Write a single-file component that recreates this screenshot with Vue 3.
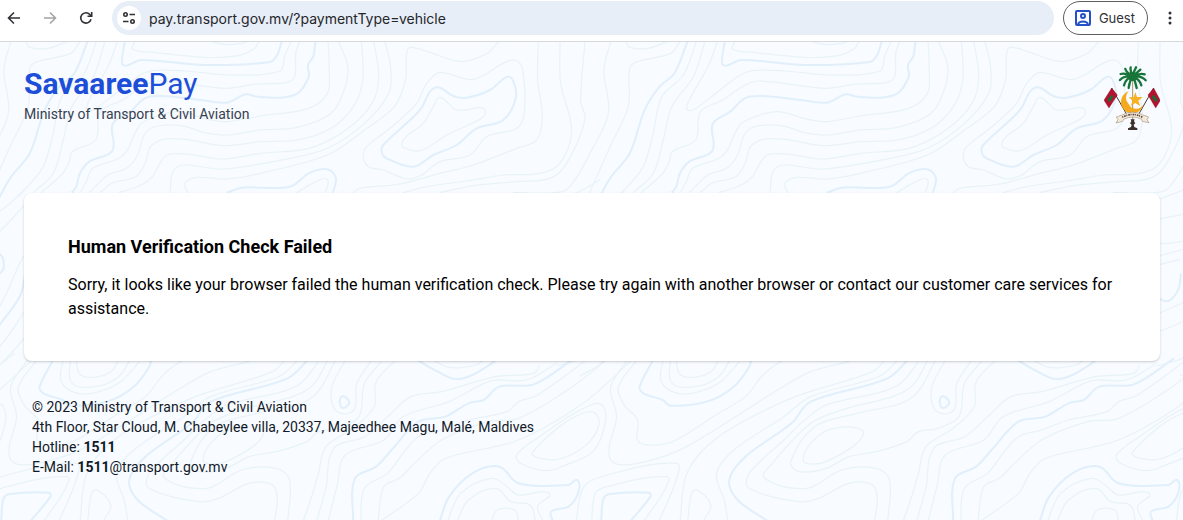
<script setup>
import { ref } from 'vue'

const url = ref('pay.transport.gov.mv/?paymentType=vehicle')

// Contour lines of the background, repeated every 600px
const TILE = 600
const tiles = [-1, 0, 1, 2, 3, 4]

const regions = [
  {
    transform: 'translate(0 -2) scale(.372 .3333)',
    thin: [
      [362, 5, 357, 28, 420, 38, 550, 52, 640, 47, 685, 25, 695, 5],
      [570, 5, 610, 14, 650, 10, 665, 5],
      [782, 5, 765, 50, 752, 93, 620, 105, 500, 93, 410, 92, 370, 110, 300, 170, 250, 210, 233, 208, 240, 180, 290, 80, 308, 30, 315, 5],
      [805, 5, 795, 40, 792, 110, 770, 128, 690, 132, 610, 145, 560, 140, 430, 123, 390, 135, 330, 180, 270, 215, 257, 300, 195, 335, 185, 370, 165, 405, 110, 458],
      [882, 5, 885, 100, 880, 160, 830, 205, 700, 228, 610, 245, 560, 238, 480, 215, 430, 225, 380, 250, 365, 275, 345, 325, 320, 355, 250, 385, 230, 430, 215, 458],
      [910, 5, 935, 80, 925, 150, 890, 220, 800, 262, 700, 270, 610, 285, 550, 278, 500, 260, 450, 255, 405, 265, 385, 290, 370, 345, 340, 385, 290, 405, 240, 458],
      [972, 5, 975, 120, 950, 200, 890, 265, 800, 300, 700, 305, 600, 317, 500, 298, 440, 298, 405, 320, 390, 370, 365, 410, 300, 430, 270, 458],
      [1005, 5, 1018, 110, 1000, 190, 930, 270, 830, 325, 700, 340, 600, 357, 500, 342, 450, 345, 430, 370, 410, 410, 380, 435, 320, 458],
      [1035, 5, 1050, 80, 1045, 160, 980, 250, 880, 325, 780, 355, 600, 387, 490, 375, 465, 395, 457, 458],
      [1340, 5, 1310, 40, 1240, 65, 1150, 35, 1103, 22, 1093, 40, 1090, 120, 1060, 200, 980, 270, 880, 345, 700, 400, 610, 417, 530, 412, 500, 425, 497, 440, 505, 458],
      [797, 458, 850, 425, 880, 418, 875, 458],
      [70, 5, 80, 22, 130, 25, 180, 5],
      [215, 5, 190, 40, 100, 65, 80, 85, 76, 200, 27, 320, -27, 455, -35, 475],
      [259, 5, 224, 105, 166, 170, 143, 280, 116, 380, 62, 455, 50, 470],
      [282, 5, 251, 110, 193, 200, 170, 300, 143, 400, 90, 458]
    ],
    bold: [
      [335, 5, 328, 70, 340, 77, 380, 60, 550, 75, 725, 66, 745, 45, 757, 5],
      [848, 5, 842, 50, 828, 75, 830, 110, 800, 160, 755, 173, 690, 170, 660, 163, 610, 188, 540, 180, 400, 170, 350, 215, 303, 252, 302, 332, 240, 365, 215, 400, 205, 440, 193, 458],
      [610, 458, 650, 443, 780, 440, 830, 400, 880, 388, 903, 415, 895, 458],
      [235, 5, 200, 100, 160, 140, 120, 210, 80, 340, 30, 410, 5, 458, -10, 490]
    ],
    rings: [],
    boldRings: []
  },
  {
    transform: 'translate(240 -2) scale(.3333)',
    thin: [
      [895, 5, 893, 120, 907, 230, 890, 300, 830, 325, 700, 375, 600, 400, 480, 432, 360, 445, 340, 458],
      [960, 5, 962, 130, 995, 270, 960, 370, 900, 400, 790, 405, 700, 420, 560, 440, 490, 458],
      [1035, 5, 1022, 180, 1035, 240, 980, 370, 930, 415, 830, 425, 700, 437, 600, 458],
      [1112, 5, 1092, 90, 1105, 220, 1050, 340, 990, 440, 950, 458, 820, 458]
    ],
    bold: [],
    rings: [
      [370, 350, 385, 380, 430, 390, 500, 417, 545, 405, 600, 365, 690, 345, 740, 290, 830, 265, 853, 220, 850, 100, 835, 65, 800, 65, 700, 118, 600, 98, 560, 130, 530, 190, 450, 265, 380, 320],
      [485, 310, 525, 333, 560, 325, 620, 285, 720, 238, 737, 215, 725, 203, 650, 210, 600, 172, 580, 200, 550, 250]
    ],
    boldRings: [
      [425, 335, 440, 355, 520, 380, 580, 345, 650, 315, 710, 265, 790, 240, 828, 170, 815, 115, 797, 112, 750, 150, 680, 173, 640, 168, 595, 142, 570, 155, 540, 210, 430, 315]
    ]
  },
  {
    transform: 'translate(0 144) scale(.3333)',
    thin: [
      [-130, 42, -52, 12, 0, -20],
      [-130, 100, -50, 85, 0, 75, 75, 10],
      [-130, 174, -50, 165, 0, 135, 75, 55],
      [-130, 212, -50, 190],
      [-130, 238, -60, 220],
      [-130, 440, -40, 400, 0, 360, 60, 230, 75, 205],
      [-130, 540, -60, 520, 0, 480, 75, 375],
      [-60, 570, 0, 535, 80, 450],
      [-130, 385, -50, 350]
    ],
    bold: [
      [-130, 335, -95, 345, -65, 310, -57, 262],
      [-30, 450, 0, 415, 60, 330, 76, 260],
      [-5, 200, 8, 215, 10, 250, -5, 265]
    ],
    rings: [],
    boldRings: []
  },
  {
    transform: 'translate(-20 308) scale(.3846 .3333)',
    thin: [
      [218, 20, 210, 90, 240, 125, 290, 130, 360, 100, 415, 35],
      [235, 20, 240, 100, 300, 110, 360, 80, 395, 20],
      [250, 20, 258, 70, 290, 82, 340, 65, 365, 20],
      [130, 20, 80, 110, 95, 200, 75, 300, 90, 340, 150, 340, 250, 305, 350, 240, 500, 130, 600, 65, 700, 35],
      [155, 20, 100, 110, 115, 165, 150, 210, 152, 275, 200, 285, 250, 270, 360, 190, 430, 140, 480, 70, 540, 20],
      [260, 515, 275, 380, 320, 300, 400, 230, 560, 140, 760, 65, 800, 20],
      [385, 515, 375, 450, 355, 370, 400, 300, 530, 200, 600, 140, 780, 78, 830, 25],
      [890, 20, 820, 110, 640, 165, 580, 215, 530, 270, 440, 370, 440, 415, 570, 455, 620, 445, 700, 400, 760, 405, 773, 450, 765, 515],
      [910, 20, 850, 120, 680, 180, 600, 220, 500, 340, 480, 385, 590, 415, 680, 360, 770, 355, 805, 390, 800, 515],
      [930, 20, 860, 145, 720, 190, 610, 230, 548, 335, 570, 365, 640, 355, 700, 320, 770, 305, 850, 275, 880, 245, 930, 235, 985, 200, 1000, 100, 1055, 20],
      [955, 20, 915, 110, 920, 175, 950, 192, 975, 175, 980, 100, 1025, 20],
      [1090, 20, 1030, 95, 1025, 170, 970, 235, 900, 290, 880, 370, 865, 430, 840, 515],
      [1455, 45, 1440, 70, 1340, 80, 1200, 125, 1120, 140, 1060, 200, 1000, 260, 920, 295, 900, 410, 875, 515],
      [1500, 40, 1420, 90, 1330, 92, 1220, 155, 1100, 200, 1050, 270, 950, 315, 930, 400, 905, 515],
      [1170, 25, 1220, 52, 1290, 45, 1315, 25],
      [1600, 10, 1450, 135, 1400, 155, 1370, 185, 1270, 210, 1200, 240, 1140, 260, 1100, 310, 1060, 370, 1000, 415, 990, 515],
      [1650, 10, 1540, 110, 1400, 205, 1320, 215, 1200, 270, 1130, 340, 1090, 385, 1050, 410, 1035, 515],
      [1700, 25, 1568, 160, 1400, 270, 1210, 325, 1170, 370, 1140, 430, 1040, 515],
      [30, 515, 40, 430, 70, 410, 225, 380, 220, 420, 165, 515],
      [-10, 515, 10, 410, 70, 375, 250, 340, 250, 390, 205, 515],
      [280, 515, 290, 430, 305, 420, 340, 465, 320, 515],
      [1215, 515, 1250, 430, 1330, 385, 1370, 410, 1400, 435, 1480, 430, 1450, 470, 1465, 515],
      [1240, 515, 1270, 450, 1340, 415, 1380, 455, 1430, 465, 1445, 515],
      [1330, 515, 1345, 480, 1390, 480, 1400, 515]
    ],
    bold: [
      [195, 20, 155, 110, 165, 130, 215, 150, 235, 167, 330, 155, 400, 110, 440, 50, 447, 20],
      [860, 20, 800, 85, 600, 155, 550, 220, 430, 320, 388, 390, 410, 450, 490, 515],
      [1130, 25, 1190, 65, 1235, 87, 1280, 75, 1350, 25],
      [1545, 25, 1440, 103, 1350, 110, 1310, 150, 1270, 160, 1210, 200, 1140, 215, 1070, 300, 1030, 350, 975, 385, 970, 515],
      [55, 515, 60, 450, 75, 433, 180, 428, 183, 440, 130, 515],
      [1195, 515, 1220, 440, 1280, 370, 1350, 350, 1400, 400, 1530, 405, 1553, 390, 1555, 430, 1530, 470, 1485, 485, 1490, 515]
    ],
    rings: [
      [580, 330, 600, 342, 640, 335, 720, 280, 733, 240, 650, 238, 600, 280]
    ],
    boldRings: [
      [940, 140, 938, 170, 948, 173, 960, 155]
    ]
  },
  {
    transform: 'translate(500 316) scale(.3333)',
    thin: [],
    bold: [],
    rings: [
      [50, 290, 60, 315, 140, 338, 200, 320, 280, 280, 315, 200, 310, 145, 280, 138, 200, 180, 120, 235],
      [97, 285, 115, 300, 180, 303, 260, 260, 297, 200, 285, 165, 250, 165, 180, 205]
    ],
    boldRings: []
  }
]

// Catmull-Rom through the points, written as cubic beziers
function smooth(flat, closed = false) {
  const pts = []
  for (let i = 0; i < flat.length; i += 2) pts.push([flat[i], flat[i + 1]])
  const n = pts.length
  const at = i => (closed ? pts[(i + n) % n] : pts[Math.max(0, Math.min(n - 1, i))])
  let d = `M${pts[0].join(' ')}`
  const last = closed ? n : n - 1
  for (let i = 0; i < last; i++) {
    const [a, b, c, e] = [at(i - 1), at(i), at(i + 1), at(i + 2)]
    // handles shortened so uneven spacing does not overshoot
    const len = Math.hypot(c[0] - b[0], c[1] - b[1])
    const handle = (p, q) => {
      const l = Math.hypot(q[0] - p[0], q[1] - p[1]) || 1
      return [((q[0] - p[0]) / l) * len * 0.33, ((q[1] - p[1]) / l) * len * 0.33]
    }
    const h1 = handle(a, c)
    const h2 = handle(b, e)
    d += `C${[b[0] + h1[0], b[1] + h1[1], c[0] - h2[0], c[1] - h2[1], c[0], c[1]].map(v => v.toFixed(1)).join(' ')}`
  }
  return closed ? d + 'Z' : d
}

const contours = regions.map(r => ({
  transform: r.transform,
  thin: r.thin.map(l => smooth(l)).concat(r.rings.map(l => smooth(l, true))).join(''),
  bold: r.bold.map(l => smooth(l)).concat(r.boldRings.map(l => smooth(l, true))).join('')
}))

const fronds = [
  'M98 50Q90 34 92 22', 'M98 50Q102 32 108 22', 'M98 50Q78 36 76 27', 'M98 50Q116 34 121 29',
  'M98 50Q76 38 62 42', 'M98 50Q120 38 134 43', 'M98 50Q72 46 60 60', 'M98 50Q124 46 137 61',
  'M98 50Q78 54 72 76', 'M98 50Q118 56 124 76', 'M98 50Q88 64 86 84', 'M98 50Q107 64 110 84'
]
</script>

<template>
  <div class="browser">
    <nav class="toolbar" aria-label="Browser">
      <button class="tool" type="button" aria-label="Back">
        <svg viewBox="0 0 16 16"><path d="M14 8H3M8 2.5L2.5 8L8 13.5" /></svg>
      </button>
      <button class="tool muted" type="button" aria-label="Forward">
        <svg viewBox="0 0 16 16"><path d="M2 8H13M8 2.5L13.5 8L8 13.5" /></svg>
      </button>
      <button class="tool" type="button" aria-label="Reload">
        <svg viewBox="0 0 16 16"><path d="M13 9.2A5.2 5.2 0 1 1 11.9 4.5L13.5 6.2M13.7 2V6.3H9.5" /></svg>
      </button>
      <div class="address">
        <button class="site-info" type="button" aria-label="Site information">
          <svg viewBox="0 0 16 16">
            <circle cx="4.5" cy="4.5" r="1.7" /><path d="M8.5 4.5H14M2 11.5H7.5" /><circle cx="11.5" cy="11.5" r="1.7" />
          </svg>
        </button>
        <input v-model="url" type="text" aria-label="Address" spellcheck="false">
      </div>
      <button class="guest" type="button">
        <svg viewBox="0 0 16 16">
          <rect x="1" y="1" width="14" height="14" rx="1" />
          <circle cx="8" cy="6" r="2" />
          <path d="M3 14.5C4 10.5 12 10.5 13 14.5" />
        </svg>
        Guest
      </button>
      <button class="more" type="button" aria-label="Menu">
        <svg viewBox="0 0 4 16"><circle cx="2" cy="3" r="1.5" /><circle cx="2" cy="8" r="1.5" /><circle cx="2" cy="13" r="1.5" /></svg>
      </button>
    </nav>

    <div class="page">
      <svg class="topo" aria-hidden="true">
        <g v-for="t in tiles" :key="t" :transform="`translate(${t * TILE} 0)`">
          <g v-for="(c, i) in contours" :key="i" :transform="c.transform">
            <path class="thin" :d="c.thin" />
            <path class="bold" :d="c.bold" />
          </g>
        </g>
      </svg>

      <header class="header">
        <div>
          <h1><strong>Savaaree</strong>Pay</h1>
          <p>Ministry of Transport &amp; Civil Aviation</p>
        </div>
        <svg class="emblem" viewBox="12 18 168 192" role="img" aria-label="Emblem of the Maldives">
          <path class="trunk" d="M98 52V196" />
          <path class="pole" d="M35 84L84 170M161 84L112 170" />
          <path class="flag" d="M35 84L52 105L27 144L12 121Z" />
          <path class="flag" d="M161 84L144 105L167 144L181 121Z" />
          <path class="panel" d="M34 104L40 111L28 127L22 119Z" />
          <path class="panel" d="M161 104L155 111L167 127L173 119Z" />
          <path class="fronds" :d="fronds.join('')" />
          <circle class="crown" cx="98" cy="49" r="14" />
          <path class="gold" d="M86 94A34 34 0 1 0 130 134A25 25 0 0 1 86 132A26 26 0 0 1 86 94Z" />
          <path class="star" d="M106 96L111 111L128 111L115 122L121 139L106 129L92 138L98 122L86 112L101 111Z" />
          <path class="ribbon" d="M49 171L66 165Q98 148 129 165L146 171L141 179L147 188L127 184L125 178Q98 164 71 178L68 184L48 189L54 179Z" />
          <path class="script" d="M67 172Q98 155 128 172" />
          <path class="foot" d="M92 178H104L102 184L106 190L101 194L103 201L112 205V210H84V205L93 201L95 194L90 190L94 184Z" />
        </svg>
      </header>

      <main class="card">
        <h2>Human Verification Check Failed</h2>
        <p>Sorry, it looks like your browser failed the human verification check. Please try again with another browser or contact our customer care services for assistance.</p>
      </main>

      <footer class="footer">
        <p>© 2023 Ministry of Transport &amp; Civil Aviation</p>
        <p>4th Floor, Star Cloud, M. Chabeylee villa, 20337, Majeedhee Magu, Malé, Maldives</p>
        <p>Hotline: <a href="tel:1511"><strong>1511</strong></a></p>
        <p>E-Mail: <a href="mailto:1511@transport.gov.mv"><strong>1511</strong>@transport.gov.mv</a></p>
      </footer>
    </div>
  </div>
</template>

<style>
body { margin: 0; background: #f8fbff; }
</style>

<style scoped>
.browser {
  display: flex;
  flex-direction: column;
  min-height: 100vh;
  font-family: Roboto, sans-serif;
  color: #000;
}

h1, h2, p { margin: 0; }
button, input { font: inherit; border: 0; padding: 0; background: none; }
a { color: inherit; text-decoration: none; }

.toolbar {
  display: flex;
  align-items: center;
  box-sizing: border-box;
  height: 42px;
  padding: 0 11px 5px 4px;
  background: #fff;
  border-bottom: 1px solid #d5d9dc;
}
.toolbar svg { display: block; fill: none; stroke: currentColor; }
.tool { flex: none; width: 36px; color: #303236; }
.tool svg { width: 16px; height: 16px; margin-left: 2px; stroke-width: 1.6; }
.tool.muted { color: #a2a4a6; }

.address {
  flex: 1;
  display: flex;
  align-items: center;
  gap: 8px;
  box-sizing: border-box;
  height: 34px;
  padding: 0 5px;
  border-radius: 17px;
  background: #e8eef8;
}
.site-info {
  display: grid;
  place-items: center;
  width: 24px;
  height: 24px;
  border-radius: 50%;
  background: #fff;
  color: #303236;
}
.site-info svg { width: 16px; height: 16px; stroke-width: 1.6; }
.address input { flex: 1; min-width: 0; outline: 0; font-size: 14px; font-family: Inter, sans-serif; color: #24262a; }

.guest {
  display: flex;
  align-items: center;
  gap: 8px;
  box-sizing: border-box;
  height: 34px;
  margin-left: 9px;
  padding: 0 12px 0 11px;
  border: 1px solid #5c5e61;
  border-radius: 17px;
  font: 13px Inter, sans-serif;
  color: #303236;
}
.guest svg { width: 16px; height: 16px; stroke: #2450c8; stroke-width: 2; }
.more { width: 4px; margin-left: 20px; color: #303236; }
.more svg { width: 4px; height: 16px; fill: currentColor; stroke: none; }

.page {
  position: relative;
  flex: 1;
  padding: 24px 23px 43px 24px;
  background: #f8fbff;
}
.topo { position: absolute; inset: 0; width: 100%; height: 100%; }
.topo path { fill: none; vector-effect: non-scaling-stroke; }
.topo .thin { stroke: #e8f3f8; stroke-width: 1.2; }
.topo .bold { stroke: #e1effb; stroke-width: 2; }

.header, .card, .footer { position: relative; }
.header { display: flex; justify-content: space-between; align-items: flex-start; }
.header h1 { font-size: 30px; line-height: 36px; font-weight: 400; color: #1d4ed8; }
.header p { font-size: 14px; line-height: 20px; margin-top: 2px; color: #374151; }

.emblem { width: 56px; height: 64px; }
.emblem path { fill: none; }
.emblem .trunk { stroke: #a89468; stroke-width: 3; }
.emblem .pole { stroke: #4b3a32; stroke-width: 3; }
.emblem .flag { fill: #b5122f; stroke: #7d1025; stroke-width: 1; }
.emblem .panel { fill: #1d6b37; }
.emblem .fronds { stroke: #17753a; stroke-width: 7; stroke-linecap: round; }
.emblem .crown { fill: #17753a; }
.emblem .gold { fill: #f5a91c; }
.emblem .star { fill: #f7b122; }
.emblem .ribbon { fill: #f3ead9; stroke: #a89584; stroke-width: 2; }
.emblem .script { stroke: #54423a; stroke-width: 5; stroke-dasharray: 3 3 5 2; }
.emblem .foot { fill: #3d302b; }

.card {
  margin-top: 63px;
  padding: 40px 44px;
  border-radius: 8px;
  background: #fff;
  box-shadow: 0 1px 3px rgba(0, 0, 0, 0.1), 0 1px 2px rgba(0, 0, 0, 0.1);
}
.card h2 { font-size: 18px; line-height: 28px; font-weight: 700; }
.card p { margin-top: 12px; font-size: 16px; line-height: 24px; }

.footer { margin: 36px 8px 0; font-size: 14px; line-height: 20px; color: #111827; }
.footer strong { font-weight: 700; }
</style>
